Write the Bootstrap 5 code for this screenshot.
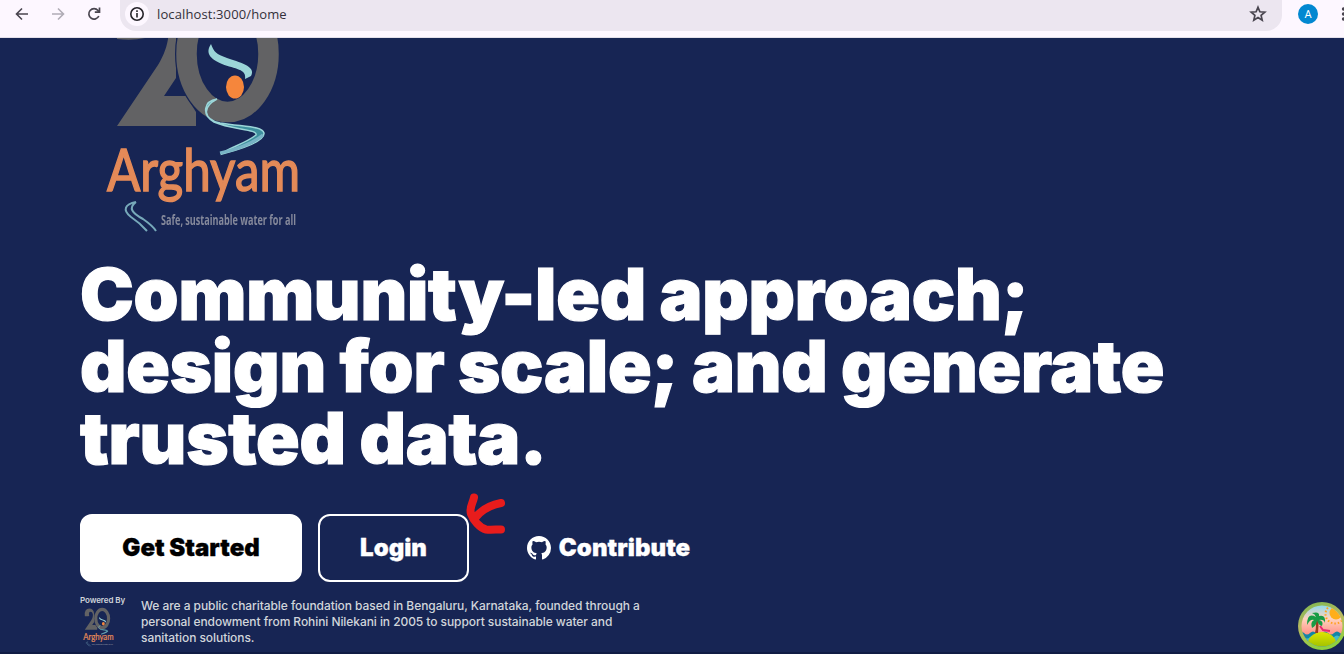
<!DOCTYPE html>
<html lang="en">
<head>
<meta charset="utf-8">
<title>Arghyam</title>
<link href="https://cdn.jsdelivr.net/npm/bootstrap@5.3.0/dist/css/bootstrap.min.css" rel="stylesheet">
<style>
body{font-family:Inter,"Liberation Sans",sans-serif;background:#172554;height:654px;overflow:hidden}
.browser-bar{height:38px;background:#fdf7ff;border-bottom:1px solid #e3e0ea}
.tools{width:120px;padding-left:14px;gap:20px;height:28px}
.omnibox{height:31px;width:1162px;background:#ece6f0;border-radius:0 0 16px 16px;padding:0 15px 3px 5px}
.info-dot{width:24px;height:24px;background:#fdf7ff}
.url{font:13px "Open Sans",sans-serif;letter-spacing:.12px;color:#33303a;margin-left:8px}
.avatar{width:20px;height:20px;background:#0288d1;color:#fff;font:11px Roboto,sans-serif;margin:4px 0 0 16px}
.hero{height:616px;overflow:hidden;padding-left:80px;border-bottom:2px solid #101c44}
.logo-big{width:200px;height:252px;margin:-51px 0 0 22px;filter:blur(.6px)}
.headline{font-size:72px;line-height:72px;font-weight:900;letter-spacing:-.2px;word-spacing:-.6px;-webkit-text-stroke:1.2px #fff;width:1120px;margin:19px 0 0}
.actions{margin-top:40px;gap:16px}
.btn-cta{height:68px;border:2px solid #fff;border-radius:12px;font-size:24px;font-weight:900;padding:0;-webkit-text-stroke:.3px currentColor}
.btn-start,.btn-start:hover{width:222px;background:#fff;color:#000}
.btn-login{width:151px;color:#fff}
.btn-contribute{border-color:transparent;width:247px;color:#fff;letter-spacing:.08px}
.scribble{left:126px;top:-30px}
.powered{margin-top:12px;gap:15px}
.powered-by{width:46px;font-size:8px;line-height:12px;font-weight:600;letter-spacing:-.08px;color:#d1d5db}
.small-mark{margin:2px 0 0 -1px}
.about{width:510px;font-size:12px;line-height:16px;font-weight:500;letter-spacing:-.07px;color:#d1d5db;padding-top:4px}
.beach{right:-2px;bottom:2px}
</style>
<script src="https://cdn.jsdelivr.net/npm/bootstrap@5.3.0/dist/js/bootstrap.bundle.min.js"></script>
</head>
<body>
<header class="browser-bar d-flex align-items-start">
  <div class="tools d-flex align-items-center">
    <svg width="16" height="16" viewBox="0 0 16 16" fill="none" stroke="#49454f" stroke-width="1.600"><path d="M14 8H3M8 2.500L2.500 8L8 13.500"/></svg>
    <svg width="16" height="16" viewBox="0 0 16 16" fill="none" stroke="#b0acb6" stroke-width="1.600"><path d="M2 8H13M8 2.500L13.500 8L8 13.500"/></svg>
    <svg width="16" height="16" viewBox="0 0 16 16" fill="none" stroke="#49454f" stroke-width="1.700"><path d="M12.800 10A5.200 5.200 0 1 1 12 4.500L13.500 6M13.500 1.500V6.200H8.800"/></svg>
  </div>
  <div class="omnibox d-flex align-items-center">
    <span class="info-dot rounded-circle d-flex align-items-center justify-content-center"><svg width="16" height="16" viewBox="0 0 16 16" fill="none" stroke="#252329" stroke-width="1.600"><circle cx="8" cy="8" r="6.200"/><path d="M8 7V11.500M8 4.300V6"/></svg></span>
    <span class="url">localhost:3000/home</span>
    <svg class="ms-auto" width="18" height="18" viewBox="0 0 18 18" fill="none" stroke="#49454f" stroke-width="1.700"><path d="M9 2.300L10.900 6.800L15.800 7.200L12.100 10.400L13.200 15.200L9 12.600L4.800 15.200L5.900 10.400L2.200 7.200L7.100 6.800Z"/></svg>
  </div>
  <span class="avatar rounded-circle d-flex align-items-center justify-content-center">A</span>
  <svg class="ms-auto" width="3" height="28" viewBox="0 0 3 28" fill="#49454f"><circle cx="2.500" cy="9" r="1.700"/><circle cx="2.500" cy="14" r="1.700"/><circle cx="2.500" cy="19" r="1.700"/></svg>
</header>
<main class="hero position-relative">
  <svg class="logo-big d-block" viewBox="102 -13 200 252">
    <g id="arghyam">
      <path d="M117 39Q112-10 146-10Q172-10 176 20V78L164 96H186L196 112V126H117L158 65C166 52 170 38 168 25Q165 10 150 11Q140 14 145 38Q132 41 117 39Z" fill="#626264"/>
      <ellipse cx="227.500" cy="54" rx="41" ry="58" fill="none" stroke="#172554" stroke-width="23"/>
      <ellipse cx="227.500" cy="54" rx="41" ry="58" fill="none" stroke="#626264" stroke-width="20.500"/>
      <path d="M211 44C205 53 210 59 222 64C235 69 247 69 245 79L251 76C257 66 238 62 227 58C216 54 214 52 211 44Z" fill="#9bd5d8"/>
      <ellipse cx="235" cy="87" rx="9" ry="11.500" fill="#f5863c"/>
      <path d="M217 99C202 107 203 119 220 123C245 127 262 126 264 133C265 141 245 148 222 154C225 149 245 144 256 135C258 129 232 130 214 122C201 114 204 101 217 99Z" fill="#3d8f9d" stroke="#9bd5d8" stroke-width="1.500"/>
      <path d="M220 153Q248 147 263 135" fill="none" stroke="#78b3c5" stroke-width="3"/>
      <path d="M136 202C125 204 122 210 131 217Q140 223 147 231M136 202C128 208 132 213 143 219Q153 226 156 231" fill="none" stroke="#77a9ba" stroke-width="2"/>
      <text x="107" y="191" textLength="193" lengthAdjust="spacingAndGlyphs" font-family="Lato" font-size="59" font-weight="400" fill="#e48a58" stroke="#e48a58" stroke-width="1.500">Arghyam</text>
      <text x="161" y="225" textLength="135" lengthAdjust="spacingAndGlyphs" font-family="Open Sans" font-size="14" font-weight="700" fill="#85899b">Safe, sustainable water for all</text>
    </g>
  </svg>
  <h1 class="headline text-white">Community-led approach; design for scale; and generate trusted data.</h1>
  <div class="actions d-flex">
    <button class="btn btn-cta btn-start">Get Started</button>
    <div class="position-relative">
      <button class="btn btn-cta btn-login">Login</button>
      <svg class="scribble position-absolute" width="70" height="60" viewBox="444 484 70 60" fill="none" stroke="#e81c1c" stroke-width="8" stroke-linecap="round" stroke-linejoin="round"><path d="M474 497.500C473 503 469 507 471 514C473 520 480 528 486 529.500C490 530 496 529.500 501 529.500M475 518C482 509 491 505 501 503"/></svg>
    </div>
    <button class="btn btn-cta btn-contribute d-flex align-items-center justify-content-center">
      <svg class="me-2" width="24" height="24" viewBox="0 0 16 16" fill="#fff"><path d="M8 0C3.580 0 0 3.580 0 8c0 3.540 2.290 6.530 5.470 7.590.4.070.55-.17.55-.38 0-.19-.01-.82-.01-1.490-2.010.37-2.530-.49-2.690-.94-.09-.23-.48-.94-.82-1.130-.28-.15-.68-.52-.01-.53.63-.01 1.080.58 1.230.82.72 1.210 1.870.87 2.330.66.070-.52.28-.87.51-1.070-1.780-.2-3.640-.89-3.640-3.950 0-.87.31-1.590.82-2.150-.08-.2-.36-1.020.08-2.120 0 0 .67-.21 2.200.82a7.600 7.600 0 0 1 4 0c1.530-1.040 2.200-.82 2.200-.82.44 1.100.16 1.920.08 2.120.51.56.82 1.270.82 2.150 0 3.070-1.870 3.750-3.650 3.950.29.25.54.73.54 1.480 0 1.070-.01 1.930-.01 2.200 0 .21.15.46.55.38A8 8 0 0 0 16 8c0-4.420-3.580-8-8-8"/></svg>Contribute
    </button>
  </div>
  <div class="powered d-flex">
    <div class="powered-by text-nowrap">Powered By<svg class="small-mark d-block" width="38" height="38" viewBox="80 -13 242 242" overflow="visible"><use href="#arghyam"/></svg></div>
    <div class="about">We are a public charitable foundation based in Bengaluru, Karnataka, founded through a personal endowment from Rohini Nilekani in 2005 to support sustainable water and sanitation solutions.</div>
  </div>
  <svg class="beach position-absolute" width="48" height="48" viewBox="0 0 48 48">
    <defs>
      <linearGradient id="sky" x2="0" y2="1"><stop stop-color="#75dcf6"/><stop offset=".35" stop-color="#ffd3bd"/><stop offset=".7" stop-color="#ff8d84"/></linearGradient>
      <linearGradient id="ring" x2=".3" y2="1"><stop stop-color="#78b94f"/><stop offset=".5" stop-color="#b9b861"/><stop offset="1" stop-color="#8ed13f"/></linearGradient>
      <linearGradient id="isle" x2="0" y2="1"><stop stop-color="#dfe300"/><stop offset="1" stop-color="#74a900"/></linearGradient>
      <clipPath id="disc"><circle cx="24" cy="24" r="20.500"/></clipPath>
    </defs>
    <circle cx="24" cy="24" r="24" fill="url(#ring)"/>
    <g clip-path="url(#disc)">
      <path d="M0 0H48V48H0Z" fill="url(#sky)"/>
      <circle cx="37" cy="12" r="9.500" fill="none" stroke="#ffa11c" stroke-width="2" stroke-dasharray="1.500 2"/>
      <circle cx="38" cy="11" r="6.500" fill="#ffae19"/>
      <path d="M0 31Q3 28 6 31T12 31T18 31T24 31T30 31T36 31T42 31T48 31V48H0Z" fill="#1286a5"/>
      <path d="M0 35Q3 32 6 35T12 35T18 35T24 35T30 35T36 35T42 35T48 35V48H0Z" fill="#42bdcb"/>
      <ellipse cx="24" cy="43" rx="14.500" ry="13" fill="url(#isle)"/>
    </g>
    <path d="M17 31Q19 23 17 16L20 15Q21 23 20 31Z" fill="#9c3c20"/>
    <path d="M18 15Q9 10 9 23Q12 17 16 18Q12 20 14 26Q19 23 19 18Q20 23 24 24Q26 19 21 18Q26 17 27 21Q28 12 21 14Q22 9 14 11Q17 12 18 15Z" fill="#179c46"/>
    <path d="M22 24L25 28L32 29" fill="none" stroke="#e72673" stroke-width="2"/>
  </svg>
</main>
</body>
</html>
